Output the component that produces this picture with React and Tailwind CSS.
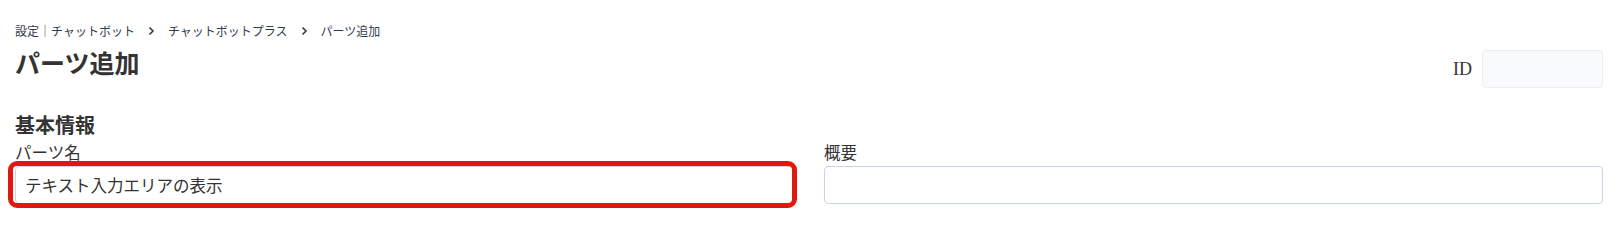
import { useState } from "react";

const jp = { fontFamily: '"Noto Sans CJK JP", "Noto Sans", sans-serif' };

function Crumb({ children }) {
  return <span className="text-[#2f3b4c]">{children}</span>;
}

function Sep() {
  return (
    <svg className="mx-[13px] h-[10px] w-[7px]" viewBox="0 0 7 10" fill="none">
      <path d="M1.5 1.5L5 5L1.5 8.5" stroke="#2f3b4c" strokeWidth="1.6" />
    </svg>
  );
}

export default function App() {
  const [name, setName] = useState("テキスト入力エリアの表示");
  const [summary, setSummary] = useState("");

  return (
    <div className="h-[231px] w-full overflow-hidden bg-white">
      <div className="pl-[15px] pr-[18px] pt-[22px] text-[#333]" style={jp}>
        <div className="flex items-center text-[12px] leading-[18px]">
          <Crumb>設定｜チャットボット</Crumb>
          <Sep />
          <Crumb>チャットボットプラス</Crumb>
          <Sep />
          <Crumb>パーツ追加</Crumb>
        </div>

        <div className="mt-[6px] flex items-start justify-between">
          <h1 className="text-[25px] font-bold leading-[32px]">パーツ追加</h1>
          <div className="mt-[4px] flex items-center gap-[10px]">
            <span className="text-[18px] text-[#333]" style={{ fontFamily: '"Liberation Serif", serif' }}>
              ID
            </span>
            <div className="h-[38px] w-[121px] rounded-[4px] border border-[#eaeef5] bg-[#f9fafc]" />
          </div>
        </div>

        <h2 className="mt-[23px] text-[20px] font-bold leading-[28px]">基本情報</h2>

        <div className="mt-[1px] grid grid-cols-2 gap-[30px]">
          <div>
            <label className="block text-[16.5px] leading-[24px]">パーツ名</label>
            <div className="relative mt-[2px]">
              <input
                value={name}
                onChange={(e) => setName(e.target.value)}
                className="h-[38px] w-full rounded-[4px] border border-[#c8d5ea] bg-white px-[9px] text-[16.5px] text-[#333] outline-none"
                style={jp}
              />
              <div className="pointer-events-none absolute -bottom-[4px] -left-[7px] -right-[3px] -top-[5px] rounded-[9px] border-[5px] border-[#e2180e]" />
            </div>
          </div>
          <div>
            <label className="block text-[16.5px] leading-[24px]">概要</label>
            <input
              value={summary}
              onChange={(e) => setSummary(e.target.value)}
              className="mt-[2px] h-[38px] w-full rounded-[4px] border border-[#c8d5ea] bg-white px-[9px] text-[16.5px] outline-none"
              style={jp}
            />
          </div>
        </div>
      </div>
    </div>
  );
}
